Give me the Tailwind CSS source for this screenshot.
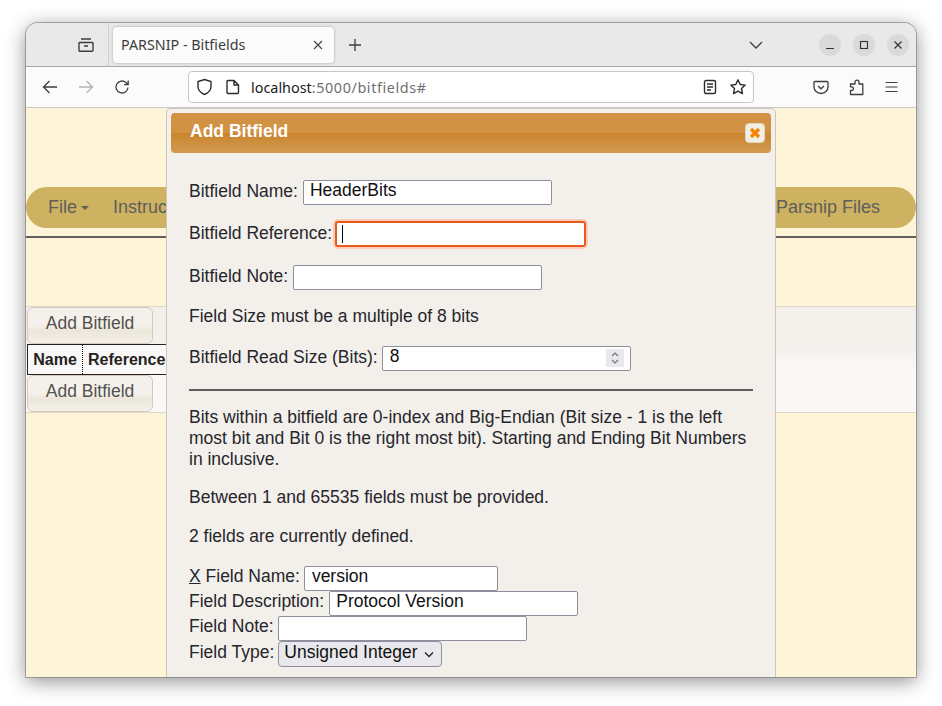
<!DOCTYPE html>
<html lang="en">
<head>
    <meta charset="UTF-8">
    <title>PARSNIP - Bitfields</title>
    <script src="https://cdn.jsdelivr.net/npm/@tailwindcss/browser@4"></script>
</head>
<body class="bg-white font-['Liberation_Sans',sans-serif] overflow-hidden">
<div class="w-[942px] h-[706px] pt-[23px] pl-[26px]">
    <!-- browser window -->
    <div class="w-[890px] h-[654px] rounded-t-[12px] overflow-hidden flex flex-col shadow-[0_0_0_1px_rgba(110,110,110,0.55),0_4px_20px_rgba(0,0,0,0.45)]">
        <!-- tab strip -->
        <div class="h-[44px] shrink-0 bg-[#e9e9e9] border-b border-[#a8a8a8] flex items-stretch font-['Noto_Sans',sans-serif]">
            <div class="w-[83px] border-r border-[#cfcfcf] flex items-center justify-end pr-[13px] mb-[-1px] h-[43px]">
                <svg width="18" height="18" viewBox="0 0 18 18" fill="none" stroke="#3d3d3d" stroke-width="1.4"><path d="M4 3h10M2.700 6.500h12.600a.7.7 0 0 1 .7.7v7.100a1 1 0 0 1-1 1H3a1 1 0 0 1-1-1V7.200a.7.7 0 0 1 .7-.7zM7 10h4"/></svg>
            </div>
            <div class="ml-[4px] mt-[4px] w-[221px] h-[36px] bg-[#fbfbfb] rounded-[4px] shadow-[0_0_3px_rgba(0,0,0,0.3)] flex items-center pl-[8px] pr-[10px] justify-between">
                <span class="text-[14.300px] text-[#3b3b3b]">PARSNIP - Bitfields</span>
                <svg width="12" height="12" viewBox="0 0 12 12" stroke="#444" stroke-width="1.1"><path d="M2 2l8 8M10 2l-8 8"/></svg>
            </div>
            <div class="ml-[14px] flex items-center">
                <svg width="14" height="14" viewBox="0 0 14 14" stroke="#3d3d3d" stroke-width="1.3"><path d="M7 1v12M1 7h12"/></svg>
            </div>
            <div class="flex-1 flex items-center justify-end gap-[12px] pr-[7px]">
                <svg class="mr-[44px]" width="14" height="10" viewBox="0 0 14 10" fill="none" stroke="#3d3d3d" stroke-width="1.3"><path d="M1 2l6 6 6-6"/></svg>
                <div class="w-[22px] h-[22px] rounded-full bg-[#dadada] flex items-center justify-center"><svg width="10" height="10" viewBox="0 0 10 10" stroke="#333" stroke-width="1.1"><path d="M1 8.500h8"/></svg></div>
                <div class="w-[22px] h-[22px] rounded-full bg-[#dadada] flex items-center justify-center"><svg width="10" height="10" viewBox="0 0 10 10" fill="none" stroke="#333" stroke-width="1.1"><rect x="1.500" y="1.500" width="7" height="7"/></svg></div>
                <div class="w-[22px] h-[22px] rounded-full bg-[#dadada] flex items-center justify-center"><svg width="10" height="10" viewBox="0 0 10 10" stroke="#333" stroke-width="1.2"><path d="M1.500 1.500l7 7M8.500 1.500l-7 7"/></svg></div>
            </div>
        </div>
        <!-- nav bar -->
        <div class="h-[41px] shrink-0 bg-[#fbfbfb] border-b border-[#c9c9c9] flex items-center font-['Noto_Sans',sans-serif]">
            <div class="w-[162px] flex items-center gap-[20px] pl-[16px]">
                <svg width="16" height="16" viewBox="0 0 16 16" fill="none" stroke="#3d3d3d" stroke-width="1.3"><path d="M15 8H1.500M7.500 2l-6 6 6 6"/></svg>
                <svg width="16" height="16" viewBox="0 0 16 16" fill="none" stroke="#b3b3b3" stroke-width="1.3"><path d="M1 8h13.500M8.500 2l6 6-6 6"/></svg>
                <svg width="16" height="16" viewBox="0 0 16 16" fill="none" stroke="#3d3d3d" stroke-width="1.3"><path d="M14 8.500A6 6 0 1 1 12 3.500L14 5.500M14.200 1.500v4.200H10"/></svg>
            </div>
            <div class="w-[566px] h-[32px] bg-white border border-[#c6c6c6] rounded-[4px] flex items-center pl-[7px] pr-[6px]">
                <svg width="17" height="18" viewBox="0 0 17 18" fill="none" stroke="#2b2b2b" stroke-width="1.4"><path d="M8.500 1.500l6.500 2v5c0 4-3 6.500-6.500 8-3.500-1.500-6.500-4-6.500-8v-5z"/></svg>
                <svg class="ml-[13px]" width="14" height="16" viewBox="0 0 14 16" fill="none" stroke="#2b2b2b" stroke-width="1.4"><path d="M2 1.500h6l4.500 4.500v7.500a1 1 0 0 1-1 1h-9.500a1 1 0 0 1-1-1v-11a1 1 0 0 1 1-1zM8 1.500V6h4.500"/></svg>
                <span class="ml-[11px] mt-[1px] text-[14.400px] text-[#1b1b1b]">localhost<span class="text-[#6f6f6f] tracking-[0.58px]">:5000/bitfields#</span></span>
                <svg class="ml-auto" width="14" height="16" viewBox="0 0 14 16" fill="none" stroke="#2b2b2b" stroke-width="1.4"><rect x="1.500" y="1.500" width="11" height="13" rx="1.500"/><path d="M4 5h6M4 8h6M4 11h4"/></svg>
                <svg class="ml-[12px]" width="18" height="18" viewBox="0 0 18 18" fill="none" stroke="#2b2b2b" stroke-width="1.4" stroke-linejoin="round"><path d="M9 1.800l2.200 4.700 5 .6-3.700 3.500 1 5.100L9 13.200l-4.500 2.500 1-5.100L1.800 7.100l5-.6z"/></svg>
            </div>
            <div class="flex-1 flex items-center justify-end gap-[20px] pr-[18px]">
                <svg width="16" height="15" viewBox="0 0 16 15" fill="none" stroke="#3d3d3d" stroke-width="1.3"><path d="M2 1.500h12a1 1 0 0 1 1 1v4.500a7 6.500 0 0 1-14 0V2.500a1 1 0 0 1 1-1zM5 6l3 2.800L11 6"/></svg>
                <svg width="16" height="17" viewBox="0 0 16 17" fill="none" stroke="#3d3d3d" stroke-width="1.3" stroke-linejoin="round"><path d="M1.500 15.500v-4h1.200a1.800 1.800 0 0 0 0-3.600H1.500V5h4.500V3.200a2 2 0 0 1 4 0V5h3.800v10.500z"/></svg>
                <svg width="13" height="12" viewBox="0 0 13 12" stroke="#3d3d3d" stroke-width="1.2"><path d="M.5 1.500h12M.5 6h12M.5 10.500h12"/></svg>
            </div>
        </div>
        <!-- page -->
        <div class="relative flex-1 bg-[#fef4d8] text-[18px] overflow-hidden">
            <div class="h-[79px]"></div>
            <div class="h-[41px] rounded-[21px] bg-[#cdb261] flex items-center justify-between pl-[22px] pr-[36px] text-[#5e5e5a]">
                <div class="flex items-center gap-[24px]">
                    <span class="flex items-center gap-[4px]">File<span class="border-x-[4px] border-x-transparent border-t-[4px] border-t-[#5e5e5a]"></span></span>
                    <span>Instructions</span>
                </div>
                <span>Parsnip Files</span>
            </div>
            <div class="h-[2px] mt-[8px] bg-[#5f5f5f]"></div>
            <div class="mt-[68px] h-[107px] border-y border-[#dfd6cc] bg-[linear-gradient(#f3f0ec,#f3f0ec_40%,#faf8f6_55%,#faf8f6)]">
                <button class="block w-[126px] h-[37px] ml-[1px] pb-[4px] rounded-[6px] border border-[#d6c9bc] bg-[linear-gradient(#f4f1ec,#f4f1ec_50%,#ebe6d9_65%,#f4f1ec)] text-[#54514c] text-[17.500px]">Add Bitfield</button>
                <div class="flex w-[200px] h-[31px] ml-[1px] border-y border-l border-[#222] bg-[#faf8f6] font-bold text-[16px] text-[#222]">
                    <span class="w-[55px] border-r border-dotted border-black flex items-center justify-center">Name</span>
                    <span class="pl-[5px] flex items-center">Reference</span>
                </div>
                <button class="block w-[126px] h-[37px] ml-[1px] pb-[4px] rounded-[6px] border border-[#d6c9bc] bg-[linear-gradient(#f4f1ec,#f4f1ec_50%,#ebe6d9_65%,#f4f1ec)] text-[#54514c] text-[17.500px]">Add Bitfield</button>
            </div>
            <!-- modal -->
            <div class="absolute left-[140px] top-0 w-[610px] h-[569px] bg-[#f3f0eb] border border-[#cfc7bb] border-b-0 rounded-t-[5px] px-[4px] pt-[4px] text-[#26262b] text-[17.500px]">
                <div class="h-[40px] rounded-[4px] bg-[linear-gradient(#d19244,#d19244_50%,#ca842c_50%,#d29a50)] flex items-center justify-between pl-[19px] pr-[6px] text-white font-bold">
                    <span class="mb-[3px]">Add Bitfield</span>
                    <span class="w-[20px] h-[20px] mb-[1px] rounded-[4px] bg-[#f3eee3] border border-[#e0d5c2] flex items-center justify-center">
                        <svg width="12" height="12" viewBox="0 0 12 12" stroke="#f58400" stroke-width="3.200"><path d="M2 2l8 8M10 2l-8 8"/></svg>
                    </span>
                </div>
                <div class="px-[18px]">
                    <div class="mt-[27px] flex items-center gap-[5px] h-[24px]"><span class="mb-[2px]">Bitfield Name:</span><span class="w-[249px] h-[25px] bg-white border border-[#8f8f9d] rounded-[2px] pl-[6px] text-[#111] leading-[19px]">HeaderBits</span></div>
                    <div class="mt-[18px] flex items-center gap-[3px] h-[24px]"><span class="mb-[2px]">Bitfield Reference:</span><span class="w-[251px] h-[26px] bg-white border-2 border-[#e8591f] rounded-[3px] shadow-[0_0_0_2px_#fbcdb8] pl-[5px] flex items-center"><span class="w-px h-[18px] bg-black"></span></span></div>
                    <div class="mt-[19px] flex items-center gap-[5px] h-[24px]"><span class="mb-[2px]">Bitfield Note:</span><span class="w-[249px] h-[25px] bg-white border border-[#8f8f9d] rounded-[2px]"></span></div>
                    <p class="mt-[15px] leading-[24px]">Field Size must be a multiple of 8 bits</p>
                    <div class="mt-[18px] flex items-center gap-[4px] h-[24px]"><span class="mb-[2px]">Bitfield Read Size (Bits):</span><span class="w-[249px] h-[25px] bg-white border border-[#8f8f9d] rounded-[2px] pl-[7px] pr-[6px] text-[#111] flex items-center justify-between"><span class="leading-[19px] mb-[4px]">8</span><span class="w-[18px] h-[18px] bg-[#e9e9ed] flex items-center justify-center"><svg width="10" height="14" viewBox="0 0 10 14" fill="none" stroke="#777" stroke-width="1.2"><path d="M2 5l3-3 3 3M2 9l3 3 3-3"/></svg></span></span></div>
                    <div class="mt-[19px] h-[2px] bg-[#5f5f5f]"></div>
                    <p class="mt-[16px] leading-[21px]">Bits within a bitfield are 0-index and Big-Endian (Bit size - 1 is the left most bit and Bit 0 is the right most bit). Starting and Ending Bit Numbers in inclusive.</p>
                    <p class="mt-[17px] leading-[21px]">Between 1 and 65535 fields must be provided.</p>
                    <p class="mt-[18px] leading-[21px]">2 fields are currently defined.</p>
                    <div class="mt-[19px] leading-[25px]">
                        <div class="flex items-center gap-[4px] h-[25px]"><span class="mb-[4px]"><span class="underline">X</span> Field Name:</span><span class="w-[194px] h-[25px] bg-white border border-[#8f8f9d] rounded-[2px] pl-[7px] text-[#111] leading-[19px]">version</span></div>
                        <div class="flex items-center gap-[5px] h-[25px]"><span class="mb-[4px]">Field Description:</span><span class="w-[249px] h-[25px] bg-white border border-[#8f8f9d] rounded-[2px] pl-[6px] text-[#111] leading-[19px]">Protocol Version</span></div>
                        <div class="flex items-center gap-[4px] h-[25px]"><span class="mb-[5px]">Field Note:</span><span class="w-[249px] h-[25px] bg-white border border-[#8f8f9d] rounded-[2px]"></span></div>
                        <div class="flex items-center gap-[4px] h-[26px]"><span class="mb-[3px]">Field Type:</span><span class="w-[164px] h-[26px] bg-[#e9e9ed] border border-[#8f8f9d] rounded-[4px] pl-[5px] pr-[7px] text-[#111] flex items-center justify-between"><span class="leading-[19px] mb-[4px]">Unsigned Integer</span><svg width="10" height="7" viewBox="0 0 10 7" fill="none" stroke="#222" stroke-width="1.300"><path d="M1 1.500l4 4 4-4"/></svg></span></div>
                    </div>
                </div>
            </div>
        </div>
    </div>
</div>
</body>
</html>
